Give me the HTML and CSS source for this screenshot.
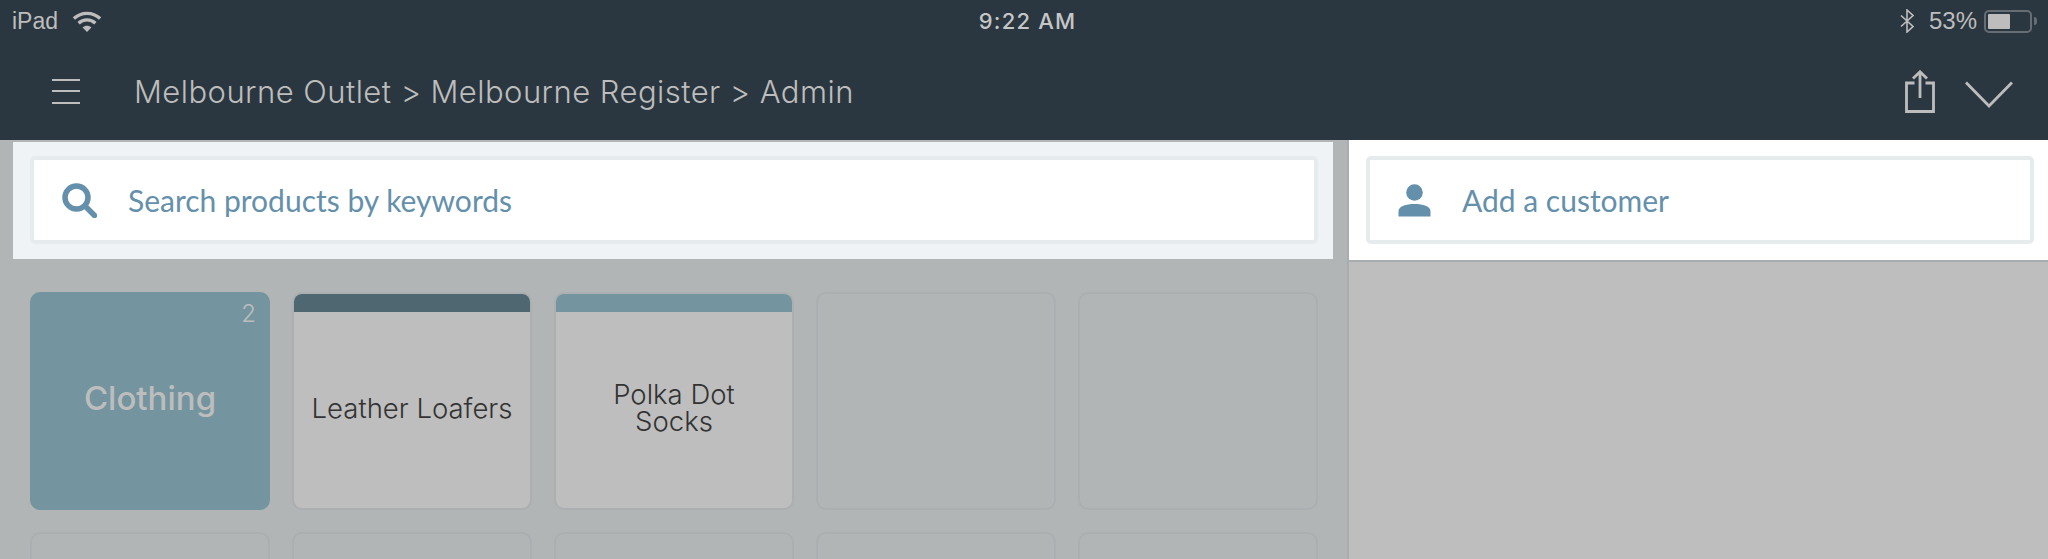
FILE: index.html
```html
<!DOCTYPE html>
<html lang="en">
<head>
  <meta charset="UTF-8">
  <title>Melbourne Register</title>
  <link rel="stylesheet" href="styles.css">
</head>
<body>

  <header class="top">
    <div class="status-bar">
      <div class="status-left">
        <span class="device">iPad</span>
        <svg class="wifi" width="30" height="21" viewBox="0 0 28 20" fill="none" stroke="#bdbdbd" stroke-width="3.2">
          <path d="M1.5 7.2C8.5 .6 19.500 .6 26.500 7.200"/>
          <path d="M6 11.600C10.500 7.400 17.500 7.400 22 11.600"/>
          <path d="M14 20l-4.200-4.400c2.400-2 6-2 8.400 0z" fill="#bdbdbd" stroke="none"/>
        </svg>
      </div>
      <div class="clock">9:22 AM</div>
      <div class="status-right">
        <svg width="14" height="24" viewBox="0 0 14 24" fill="none" stroke="#bdbdbd" stroke-width="1.600">
          <path d="M1 6.500l12 11-6 5.500V1l6 5.500-12 11"/>
        </svg>
        <span class="percent">53%</span>
        <div class="battery"><div class="battery-fill"></div></div>
        <div class="battery-nub"></div>
      </div>
    </div>

    <nav class="nav-bar">
      <div class="hamburger"><span></span><span></span><span></span></div>
      <div class="crumbs">Melbourne Outlet &gt; Melbourne Register &gt; Admin</div>
      <svg class="share" width="30" height="43" viewBox="0 0 30 43" fill="none" stroke="#bdbdbd" stroke-width="2.800">
        <path d="M9.500 13H1.500v28.500h27V13h-8"/>
        <path d="M15 28V2M8 8.500L15 1.800l7 6.700"/>
      </svg>
      <svg class="chevron" width="48" height="27" viewBox="0 0 48 27" fill="none" stroke="#bdbdbd" stroke-width="2.800">
        <path d="M1 1.500L24 25 47 1.500"/>
      </svg>
    </nav>
  </header>

  <main class="layout">
    <section class="products">
      <div class="search-panel">
        <div class="field">
          <svg class="search-icon" width="35" height="35" viewBox="0 0 35 35" fill="none" stroke="#6490ab">
            <circle cx="14.500" cy="14.500" r="11.500" stroke-width="5.500"/>
            <path d="M23 23l9.500 9.500" stroke-width="5.500" stroke-linecap="round"/>
          </svg>
          <span>Search products by keywords</span>
        </div>
      </div>

      <div class="tiles">
        <div class="tile tile-folder">
          <span class="count">2</span>
          <span class="folder-name">Clothing</span>
        </div>
        <div class="tile tile-product">
          <div class="stripe stripe-dark"></div>
          <div class="tile-name">Leather Loafers</div>
        </div>
        <div class="tile tile-product">
          <div class="stripe stripe-light"></div>
          <div class="tile-name">Polka Dot<br>Socks</div>
        </div>
        <div class="tile"></div>
        <div class="tile"></div>
        <div class="tile"></div>
        <div class="tile"></div>
        <div class="tile"></div>
        <div class="tile"></div>
        <div class="tile"></div>
      </div>
    </section>

    <aside class="sale">
      <div class="customer-panel">
        <div class="field">
          <svg class="person-icon" width="33" height="33" viewBox="0 0 33 33" fill="#6490ab">
            <circle cx="16.500" cy="8.500" r="8.300"/>
            <path d="M.5 32.500v-5C.5 22 8 20 16.500 20s16 2 16 7.500v5z"/>
          </svg>
          <span>Add a customer</span>
        </div>
      </div>
    </aside>
  </main>

</body>
</html>
```

FILE: styles.css
```css
html, body {
  margin: 0;
  height: 559px;
  overflow: hidden;
}

body {
  background-color: #b1b5b6;
  font-family: 'Inter', 'Liberation Sans', sans-serif;
}

.top {
  height: 140px;
  background-color: #2b3740;
  color: #bdbdbd;
}

.status-bar {
  height: 42px;
  display: grid;
  grid-template-columns: 1fr auto 1fr;
  align-items: center;
  padding: 0 11px 0 12px;
}

.status-left, .status-right {
  display: flex;
  align-items: center;
}

.status-right {
  justify-content: flex-end;
}

.device {
  font-family: 'Liberation Sans', sans-serif;
  font-size: 23px;
  margin-right: 14px;
}

.clock {
  margin-left: 6px;
  font-size: 22px;
  font-weight: 500;
  letter-spacing: 1.2px;
  color: #c4c6c7;
}

.percent {
  font-family: 'Liberation Sans', sans-serif;
  font-size: 24px;
  margin: 0 7px 0 15px;
}

.battery {
  width: 48px;
  height: 23px;
  box-sizing: border-box;
  border: 2px solid #666e74;
  border-radius: 5px;
  padding: 2px;
}

.battery-fill {
  width: 22px;
  height: 100%;
  background-color: #bdbdbd;
  border-radius: 1px;
}

.battery-nub {
  width: 3px;
  height: 8px;
  margin-left: 2px;
  background-color: #666e74;
  border-radius: 0 3px 3px 0;
}

.nav-bar {
  height: 98px;
  display: flex;
  align-items: center;
  padding: 0 35px 0 52px;
}

.hamburger {
  width: 28px;
  display: flex;
  flex-direction: column;
  gap: 9.500px;
}

.hamburger span {
  height: 2px;
  background-color: #bdbdbd;
}

.crumbs {
  flex: 1;
  margin-left: 54px;
  font-size: 31px;
  font-weight: 300;
  letter-spacing: 0.45px;
}

.chevron {
  margin-left: 30px;
  margin-top: 7px;
}

.layout {
  display: grid;
  grid-template-columns: 1349px 1fr;
  height: 419px;
}

.products {
  border-right: 2px solid #a9adb0;
  box-sizing: border-box;
}

.search-panel {
  margin: 2px 14px 0 13px;
  height: 117px;
  padding: 14px 15px 0 17px;
  box-sizing: border-box;
  background-color: #eff3f5;
}

.field {
  height: 88px;
  box-sizing: border-box;
  display: flex;
  align-items: center;
  padding-left: 28px;
  background-color: white;
  border: 4px solid #e6ebee;
  border-radius: 5px;
  font-family: 'Lato', sans-serif;
  font-size: 30px;
  color: #6490ab;
}

.search-icon {
  margin-right: 31px;
}

.tiles {
  display: grid;
  grid-template-columns: repeat(5, 240px);
  grid-auto-rows: 218px;
  gap: 22px;
  padding: 33px 0 0 30px;
}

.tile {
  box-sizing: border-box;
  border: 2px solid #abafb1;
  border-radius: 10px;
}

.tile-folder {
  position: relative;
  display: flex;
  align-items: center;
  justify-content: center;
  border: none;
  background-color: #74959f;
  color: #bdbdbd;
}

.folder-name {
  font-size: 33px;
  font-weight: 500;
  margin-bottom: 7px;
}

.count {
  position: absolute;
  top: 7px;
  right: 14px;
  font-size: 24px;
  font-weight: 300;
}

.tile-product {
  display: flex;
  flex-direction: column;
  overflow: hidden;
  background-color: #bebebe;
  color: #333;
  font-size: 27.500px;
  line-height: 27px;
  font-weight: 300;
  text-align: center;
}

.stripe {
  height: 18px;
}

.stripe-dark {
  background-color: #4e6771;
}

.stripe-light {
  background-color: #74959f;
}

.tile-name {
  flex: 1;
  display: flex;
  align-items: center;
  justify-content: center;
  padding-bottom: 4px;
}

.sale {
  background-color: #bebebe;
}

.customer-panel {
  height: 122px;
  box-sizing: border-box;
  background-color: white;
  border-bottom: 2px solid #a9adb0;
  padding: 16px 14px 0 17px;
}

.person-icon {
  margin-right: 31px;
}
```
